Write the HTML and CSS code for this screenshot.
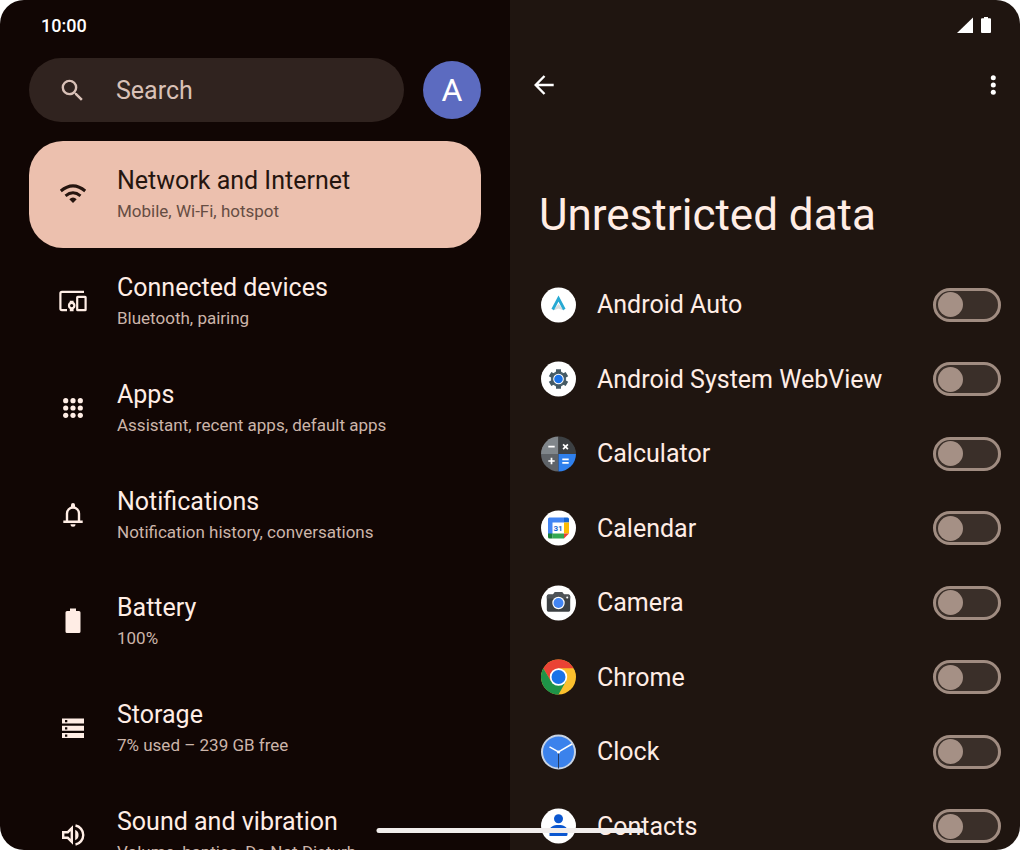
FILE: index.html
```html
<!DOCTYPE html>
<html lang="en">
<head>
<meta charset="utf-8">
<meta name="viewport" content="width=device-width, initial-scale=1">
<title>Settings</title>
<link rel="stylesheet" href="styles.css">
</head>
<body>
<div class="device">
  <section class="pane pane-menu">
    <div class="status"><time>10:00</time></div>
    <div class="top">
      <label class="search">
        <svg class="search-icon" viewBox="0 0 24 24" aria-hidden="true"><path d="M15.500 14h-.79l-.28-.27A6.470 6.470 0 0 0 16 9.500 6.500 6.500 0 1 0 9.500 16c1.610 0 3.090-.59 4.230-1.570l.27.28v.79l5 4.990L20.490 19zm-6 0C7.010 14 5 11.990 5 9.500S7.010 5 9.500 5 14 7.010 14 9.500 11.990 14 9.500 14"/></svg>
        <input type="search" placeholder="Search" aria-label="Search">
      </label>
      <button class="avatar" type="button" aria-label="Account">A</button>
    </div>
    <nav class="menu">
      <a class="item selected" href="#network" aria-current="page">
        <svg class="item-icon" viewBox="0 0 28 28" aria-hidden="true"><g fill="none" stroke="currentColor" stroke-width="3"><path d="M1.800 11Q14 .8 26.200 11"/><path d="M6.500 15.800Q14 9.800 21.500 15.800"/></g><path d="M10.300 19.200Q14 16 17.700 19.200L14 23z"/></svg>
        <span class="item-text"><span class="title">Network and Internet</span><span class="sub">Mobile, Wi-Fi, hotspot</span></span>
      </a>
      <a class="item" href="#devices">
        <svg class="item-icon" viewBox="0 0 28 28" aria-hidden="true"><g fill="none" stroke="currentColor" stroke-width="2.200"><path d="M25 4.800H3A1.600 1.600 0 0 0 1.400 6.400v15.200A1.600 1.600 0 0 0 3 23.200h5"/><rect x="18.200" y="9.800" width="8.400" height="13.400" rx=".5"/><circle cx="12.700" cy="18.600" r="2.700"/></g><path d="M10.800 13.800h3.800v2.500h-3.800zM10.800 21h3.800v3.200h-3.800z"/></svg>
        <span class="item-text"><span class="title">Connected devices</span><span class="sub">Bluetooth, pairing</span></span>
      </a>
      <a class="item" href="#apps">
        <svg class="item-icon" viewBox="0 0 28 28" aria-hidden="true"><circle cx="6.700" cy="6.700" r="2.600"/><circle cx="14" cy="6.700" r="2.600"/><circle cx="21.300" cy="6.700" r="2.600"/><circle cx="6.700" cy="14" r="2.600"/><circle cx="14" cy="14" r="2.600"/><circle cx="21.300" cy="14" r="2.600"/><circle cx="6.700" cy="21.300" r="2.600"/><circle cx="14" cy="21.300" r="2.600"/><circle cx="21.300" cy="21.300" r="2.600"/></svg>
        <span class="item-text"><span class="title">Apps</span><span class="sub">Assistant, recent apps, default apps</span></span>
      </a>
      <a class="item" href="#notifications">
        <svg class="item-icon" viewBox="0 0 28 28" aria-hidden="true"><path d="M8 20v-7.500a6 6 0 0 1 12 0V20M4.300 20.800h19.400" fill="none" stroke="currentColor" stroke-width="2.400"/><path d="M12 6.500V4a2 2 0 0 1 4 0v2.500zM11.500 23.300h5a2.500 2.500 0 0 1-5 0z"/></svg>
        <span class="item-text"><span class="title">Notifications</span><span class="sub">Notification history, conversations</span></span>
      </a>
      <a class="item" href="#battery">
        <svg class="item-icon" viewBox="0 0 28 28" aria-hidden="true"><path d="M11 1.500h6V4h3a1.500 1.500 0 0 1 1.500 1.500v19a1.500 1.500 0 0 1-1.500 1.500H8a1.500 1.500 0 0 1-1.500-1.500v-19A1.500 1.500 0 0 1 8 4h3z"/></svg>
        <span class="item-text"><span class="title">Battery</span><span class="sub">100%</span></span>
      </a>
      <a class="item" href="#storage">
        <svg class="item-icon" viewBox="0 0 28 28" aria-hidden="true"><path fill-rule="evenodd" d="M3 4.500h22v5H3zM6 6v2.300h2.300V6zM3 11.700h22v5H3zm3 1.500v2.300h2.300v-2.300zM3 18.900h22v5H3zm3 1.500v2.300h2.300v-2.300z"/></svg>
        <span class="item-text"><span class="title">Storage</span><span class="sub">7% used – 239 GB free</span></span>
      </a>
      <a class="item" href="#sound">
        <svg class="item-icon" viewBox="0 0 28 28" aria-hidden="true"><path d="M4.200 11.200h4.600l4-4v13.600l-4-4H4.200z" fill="none" stroke="currentColor" stroke-width="2.400"/><path d="M16.500 4.500a9.700 9.700 0 0 1 0 19" fill="none" stroke="currentColor" stroke-width="2.400"/><path d="M16.200 8.800a5.700 5.700 0 0 1 0 10.400z"/></svg>
        <span class="item-text"><span class="title">Sound and vibration</span><span class="sub">Volume, haptics, Do Not Disturb</span></span>
      </a>
    </nav>
  </section>

  <main class="pane pane-detail">
    <div class="status status-right">
      <svg class="status-icon" viewBox="0 0 16 16" aria-label="Signal"><path d="M0 16 16 .5V16z"/></svg>
      <svg class="status-icon" viewBox="0 0 16 16" aria-label="Battery"><path d="M6 0h4v1.200h2a1 1 0 0 1 1 1V15a1 1 0 0 1-1 1H4a1 1 0 0 1-1-1V2.200a1 1 0 0 1 1-1h2z"/></svg>
    </div>
    <div class="toolbar">
      <button class="icon-button" type="button" aria-label="Back"><svg viewBox="0 0 24 24"><path d="M21.700 12H4M12.500 3 3.700 12l8.800 9" fill="none" stroke="currentColor" stroke-width="2.400"/></svg></button>
      <button class="icon-button" type="button" aria-label="More options"><svg viewBox="0 0 24 24"><circle cx="12.300" cy="4.700" r="2.500"/><circle cx="12.300" cy="12" r="2.500"/><circle cx="12.300" cy="19.300" r="2.500"/></svg></button>
    </div>
    <h1>Unrestricted data</h1>
    <ul class="apps">
      <li class="app">
        <svg class="app-icon" viewBox="0 0 36 36" aria-hidden="true"><circle cx="18.500" cy="18" r="17.500" fill="#fff"/><path d="m18.500 17 5.500 6.500-5.500-2-5.500 2z" fill="#d9dcdd"/><path d="m12.700 22.500 5.800-11 5.800 11" fill="none" stroke="#27a9d3" stroke-width="2.800"/></svg>
        <label for="auto">Android Auto</label><input class="switch" type="checkbox" role="switch" id="auto">
      </li>
      <li class="app">
        <svg class="app-icon" viewBox="0 0 36 36" aria-hidden="true"><circle cx="18.500" cy="18" r="17.500" fill="#fff"/><circle cx="18.500" cy="18" r="7.700" fill="#4f6871"/><path d="M18.500 8.300v19.400M10.100 13.100l16.800 9.800M10.100 22.900l16.800-9.800" stroke="#455a64" stroke-width="5"/><circle cx="18.500" cy="18" r="5.300" fill="#fff"/><circle cx="18.500" cy="18" r="4.300" fill="#1a73e8"/></svg>
        <label for="webview">Android System WebView</label><input class="switch" type="checkbox" role="switch" id="webview">
      </li>
      <li class="app">
        <svg class="app-icon" viewBox="0 0 36 36" aria-hidden="true"><g transform="translate(.5)"><path d="M18 18H.5A17.500 17.500 0 0 1 18 .5z" fill="#80868b"/><path d="M18 18V.5A17.500 17.500 0 0 1 35.500 18z" fill="#3c4043"/><path d="M18 18v17.500A17.500 17.500 0 0 1 .5 18z" fill="#5f6368"/><path d="M18 18h17.500A17.500 17.500 0 0 1 18 35.500z" fill="#2f80ed"/><path d="M7.800 10.700h6.400M22.600 8.300l4.800 4.800m0-4.800-4.800 4.800M7.800 25h6.400M11 21.800v6.400M21.800 23.300h6.400m-6.400 3.500h6.400" stroke="#fff" stroke-width="1.700"/></g></svg>
        <label for="calculator">Calculator</label><input class="switch" type="checkbox" role="switch" id="calculator">
      </li>
      <li class="app">
        <svg class="app-icon" viewBox="0 0 36 36" aria-hidden="true"><g transform="translate(.5)"><circle cx="18" cy="18" r="17.500" fill="#fff"/><path d="M9 7.500h14.500v5H12v12H7.500V9A1.500 1.500 0 0 1 9 7.500z" fill="#4285f4"/><path d="M23.500 7.500h3.500A1.500 1.500 0 0 1 28.500 9v3.500h-5z" fill="#1967d2"/><path d="M23.500 12.500h5v11h-5z" fill="#fbbc04"/><path d="M12 23.500h11.500v5H12z" fill="#34a853"/><path d="M7.500 23.500H12v5H9A1.500 1.500 0 0 1 7.500 27z" fill="#188038"/><path d="M23.500 23.500h5l-5 5z" fill="#ea4335"/></g><text class="calendar-day" x="18" y="21" text-anchor="middle">31</text></svg>
        <label for="calendar">Calendar</label><input class="switch" type="checkbox" role="switch" id="calendar">
      </li>
      <li class="app">
        <svg class="app-icon" viewBox="0 0 36 36" aria-hidden="true"><g transform="translate(.5)"><circle cx="18" cy="18" r="17.500" fill="#fff"/><path d="M8 9.500h4.500L14.500 7h7l2 2.500H28a1.700 1.700 0 0 1 1.700 1.700V25A1.700 1.700 0 0 1 28 26.700H8A1.700 1.700 0 0 1 6.300 25V11.200A1.700 1.700 0 0 1 8 9.500z" fill="#3c4043"/><path d="M6.300 13.500h23.400v-2.300A1.700 1.700 0 0 0 28 9.500h-4.500l-2-2.500h-7l-2 2.500H8a1.700 1.700 0 0 0-1.700 1.700z" fill="#4e5357"/><circle cx="18" cy="18" r="6.200" fill="#fff"/><circle cx="18" cy="18" r="5" fill="#4285f4"/><circle cx="26.700" cy="12.400" r="1" fill="#fff"/></g></svg>
        <label for="camera">Camera</label><input class="switch" type="checkbox" role="switch" id="camera">
      </li>
      <li class="app">
        <svg class="app-icon" viewBox="0 0 36 36" aria-hidden="true"><g transform="translate(.5)"><circle cx="18" cy="18" r="17.500" fill="#fbc02d"/><path d="M2.800 9.300a17.500 17.500 0 0 1 30.400 0H18L10.500 22.300z" fill="#ea4335"/><path d="M2.800 9.300A17.500 17.500 0 0 0 18 35.500l7.500-13.200L18 18l-7.500 4.300z" fill="#1e9348"/><circle cx="18" cy="18" r="8.700" fill="#fff"/><circle cx="18" cy="18" r="7" fill="#1a73e8"/></g></svg>
        <label for="chrome">Chrome</label><input class="switch" type="checkbox" role="switch" id="chrome">
      </li>
      <li class="app">
        <svg class="app-icon" viewBox="0 0 36 36" aria-hidden="true"><g transform="translate(.5)"><circle cx="18" cy="18" r="16.500" fill="#3b82ec" stroke="#c8d3e3" stroke-width="2"/><path d="M18 18v16.500" stroke="#263d63"/><path d="m9 12.800 9 5.200 13.500-8" fill="none" stroke="#fff" stroke-width="1.500"/><circle cx="18" cy="18" r="1.600" fill="#fff"/></g></svg>
        <label for="clock">Clock</label><input class="switch" type="checkbox" role="switch" id="clock">
      </li>
      <li class="app">
        <svg class="app-icon" viewBox="0 0 36 36" aria-hidden="true"><g transform="translate(.5)"><circle cx="18" cy="18" r="17.500" fill="#fff"/><circle cx="18" cy="10.700" r="4.500" fill="#0b57d0"/><path d="M9 28V22.500c0-3.500 4-5.500 9-5.500s9 2 9 5.500v4a1.500 1.500 0 0 1-1.500 1.500z" fill="#0b57d0"/></g></svg>
        <label for="contacts">Contacts</label><input class="switch" type="checkbox" role="switch" id="contacts">
      </li>
    </ul>
  </main>
  <div class="home-bar"></div>
</div>
</body>
</html>
```

FILE: styles.css
```css
* { box-sizing: border-box; }

body {
  margin: 0;
  background: #fff;
  font-family: Roboto, "Liberation Sans", sans-serif;
}

.device {
  position: relative;
  display: grid;
  grid-template-columns: 1fr 1fr;
  height: 100vh;
  overflow: hidden;
  border-radius: 24px;
}

.pane { min-width: 0; overflow: hidden; }
.pane-menu { padding: 0 29px; background: #110604; color: #ffede5; }
.pane-detail { background: #1f1510; color: #ffede5; }

svg { display: block; flex: none; fill: currentColor; }

.status {
  display: flex;
  align-items: center;
  height: 50px;
  padding: 0 12px;
  color: #fff;
  font-size: 18px;
  font-weight: 500;
}
.status-right { justify-content: flex-end; gap: 5px; padding: 0 26px; }
.status-icon { width: 16px; height: 16px; }

.top {
  display: flex;
  align-items: center;
  gap: 19px;
  margin: 8px 0 19px;
}
.search {
  display: flex;
  flex: 1;
  align-items: center;
  gap: 29px;
  min-width: 0;
  height: 64px;
  padding: 0 29px;
  border-radius: 32px;
  background: #30231f;
  color: #d9c1b7;
}
.search-icon { width: 29px; height: 29px; }
.search input {
  flex: 1;
  min-width: 0;
  padding: 0;
  border: 0;
  outline: 0;
  background: none;
  color: inherit;
  font: inherit;
  font-size: 25px;
}
.search input::placeholder { color: #d9c1b7; opacity: 1; }

.avatar {
  width: 58px;
  height: 58px;
  padding: 0;
  border: 0;
  border-radius: 50%;
  background: #5c6bc0;
  color: #fff;
  font: inherit;
  font-size: 32px;
}

.item {
  display: flex;
  align-items: center;
  gap: 30px;
  height: 107px;
  padding: 0 30px 1px;
  border-radius: 34px;
  color: #ffede5;
  text-decoration: none;
}
.item:nth-child(4n) { height: 106px; }
.item-icon { width: 28px; height: 28px; }
.item-text { display: flex; flex-direction: column; white-space: nowrap; }
.title { font-size: 25px; line-height: 34px; }
.sub { color: #ccb5aa; font-size: 17px; line-height: 26px; }
.selected { background: #ecc0ae; color: #25150f; }
.selected .sub { color: #664d43; }

.toolbar {
  display: flex;
  justify-content: space-between;
  padding: 18px 10px 0 17px;
}
.icon-button {
  padding: 5px;
  border: 0;
  background: none;
  color: #fff;
}
.icon-button svg { width: 24px; height: 24px; }

h1 {
  margin: 85px 29px 24px;
  font-size: 44px;
  font-weight: 400;
  line-height: 56px;
}

.apps { margin: 0; padding: 0 19px 0 30px; list-style: none; }
.app {
  display: flex;
  align-items: center;
  gap: 21px;
  height: 74px;
  font-size: 25px;
}
.app:nth-child(odd) { height: 75px; }
.app label { flex: 1; white-space: nowrap; }
.app-icon { width: 36px; height: 36px; }
.calendar-day { fill: #1967d2; font-size: 8px; font-weight: 700; }

.switch {
  display: flex;
  flex: none;
  align-items: center;
  appearance: none;
  width: 68px;
  height: 34px;
  margin: 0;
  padding: 0 2px;
  border: 3px solid #a08c81;
  border-radius: 17px;
  background: #3a2f29;
}
.switch::before {
  content: "";
  width: 25px;
  height: 25px;
  border-radius: 50%;
  background: #a59085;
}
.switch:checked { justify-content: flex-end; }

.home-bar {
  position: absolute;
  bottom: 17px;
  left: 50%;
  width: 267px;
  height: 5px;
  border-radius: 3px;
  background: #f1edec;
  transform: translateX(-50%);
}
```
